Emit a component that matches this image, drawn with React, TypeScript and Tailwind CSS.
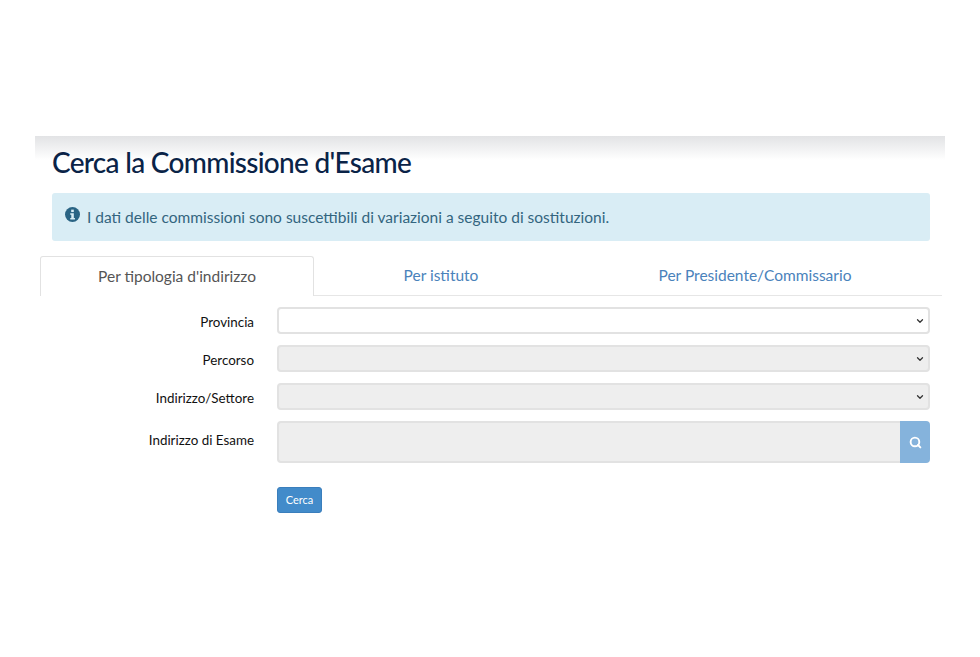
import { ChevronDown, Search } from "lucide-react";

const font = "font-['Lato','Noto_Sans',sans-serif]";

function SelectRow({ label, disabled, className }: { label: string; disabled?: boolean; className: string }) {
  return (
    <div className={`flex items-center ${className}`}>
      <label className="w-[214px] pt-[4px] text-right text-[13.4px] text-[#111]">{label}</label>
      <div
        className={`ml-[23px] flex h-[27px] flex-1 items-center justify-end rounded-[4px] border-2 border-[#e2e2e2] pr-[3px] ${
          disabled ? "bg-[#eeeeee]" : "bg-white"
        }`}
      >
        <ChevronDown size={10} strokeWidth={3} className="text-[#333]" />
      </div>
    </div>
  );
}

export default function App() {
  return (
    <div className={`h-[657px] bg-white pt-[136px] ${font}`}>
      <div className="mx-[35px] h-[24px] bg-gradient-to-b from-[#e2e3e5] to-white" />
      <div className="-mt-[24px] ml-[40px] mr-[38px]">
        <h1 className="pl-[12px] pt-[7px] text-[28px] font-medium leading-[38px] tracking-[-0.7px] text-[#0a2347]">
          Cerca la Commissione d'Esame
        </h1>
        <div className="mx-[12px] mt-[12px] flex h-[48px] items-start gap-[7px] rounded-[3px] bg-[#d9edf5] pl-[13px] pt-[14px] text-[#33657f]">
          <svg width="15" height="15" viewBox="0 0 16 16" className="shrink-0">
            <circle cx="8" cy="8" r="8" fill="#2a6484" />
            <rect x="6.6" y="2.8" width="2.8" height="2.6" fill="#d9edf5" />
            <path d="M5.6 6.6h3.8v5.2h1.2v1.6H5.6v-1.6h1.1V8.2H5.6z" fill="#d9edf5" />
          </svg>
          <span className="text-[15.5px] leading-[20px]">
            I dati delle commissioni sono suscettibili di variazioni a seguito di sostituzioni.
          </span>
        </div>

        <div className="mt-[15px] flex h-[40px] border-b border-[#e6e6e6] text-[15.5px]">
          <div className="z-10 -mb-px flex w-[274px] items-center justify-center rounded-t-[3px] border border-b-0 border-[#e2e2e2] bg-white text-[#555]">
            Per tipologia d'indirizzo
          </div>
          <div className="flex w-[254px] items-center justify-center text-[#4a82bb]">Per istituto</div>
          <div className="flex flex-1 items-center justify-center text-[#4a82bb]">Per Presidente/Commissario</div>
        </div>

        <div className="mr-[12px] mt-[11px]">
          <SelectRow label="Provincia" className="" />
          <SelectRow label="Percorso" disabled className="mt-[11px]" />
          <SelectRow label="Indirizzo/Settore" disabled className="mt-[11px]" />
          <div className="mt-[11px] flex items-center">
            <label className="w-[214px] pb-[4px] text-right text-[13.4px] text-[#111]">Indirizzo di Esame</label>
            <div className="ml-[23px] flex h-[42px] flex-1">
              <div className="flex-1 rounded-l-[4px] border-2 border-r-0 border-[#e2e2e2] bg-[#eeeeee]" />
              <div className="flex w-[30px] items-center justify-center rounded-r-[4px] bg-[#85b3dc]">
                <Search size={13} strokeWidth={3.5} className="text-white" />
              </div>
            </div>
          </div>
          <button className="ml-[237px] mt-[24px] flex h-[26px] w-[45px] items-center justify-center rounded-[3px] border border-[#3a7ebc] bg-[#428bca] text-[11px] text-white">
            Cerca
          </button>
        </div>
      </div>
    </div>
  );
}
